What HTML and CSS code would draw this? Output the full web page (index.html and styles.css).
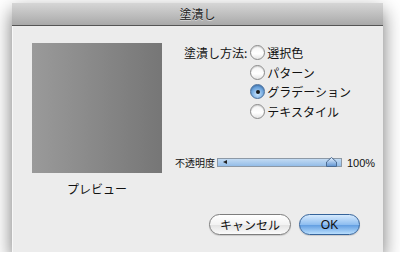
FILE: index.html
```html
<!DOCTYPE html>
<html lang="ja">
<head>
    <meta charset="UTF-8">
    <title>塗潰し</title>
    <link rel="stylesheet" href="styles.css">
</head>
<body>

    <div class="window">
        <div class="titlebar">塗潰し</div>
        <div class="content">
            <div class="main">
                <div class="preview-col">
                    <div class="preview"></div>
                    <div class="preview-label">プレビュー</div>
                </div>
                <div class="options-col">
                    <div class="fill-method">
                        <div class="field-label">塗潰し方法:</div>
                        <div class="radio-list">
                            <div class="radio-row"><span class="radio"></span>選択色</div>
                            <div class="radio-row"><span class="radio"></span>パターン</div>
                            <div class="radio-row"><span class="radio checked"></span>グラデーション</div>
                            <div class="radio-row"><span class="radio"></span>テキスタイル</div>
                        </div>
                    </div>
                    <div class="opacity-row">
                        <span class="opacity-label">不透明度</span>
                        <div class="slider">
                            <span class="slider-arrow"></span>
                            <svg class="slider-thumb" width="11" height="10" viewBox="0 0 11 10">
                                <defs>
                                    <linearGradient id="thumbGrad" x1="0" y1="0" x2="0" y2="1">
                                        <stop offset="0" stop-color="#eaf4ff"/>
                                        <stop offset="1" stop-color="#5d93d2"/>
                                    </linearGradient>
                                </defs>
                                <path d="M5.5 0.5 L10.5 5 L10.5 9.5 L0.5 9.5 L0.5 5 Z" fill="url(#thumbGrad)" stroke="#4c6c92" stroke-width="1" stroke-linejoin="round"/>
                            </svg>
                        </div>
                        <span class="opacity-value">100%</span>
                    </div>
                </div>
            </div>
            <div class="buttons">
                <button class="btn">キャンセル</button>
                <button class="btn btn-default">OK</button>
            </div>
        </div>
    </div>

</body>
</html>
```

FILE: styles.css
```css
body {
    margin: 0;
    padding: 0;
    background-color: #fff;
    font-family: "Noto Sans CJK JP", "Liberation Sans", sans-serif;
    font-size: 12px;
    color: #111;
}
.window {
    width: 371px;
    height: 249px;
    margin: 3px 0 0 12px;
    background: #ececec;
    box-shadow: 0 8px 18px rgba(0,0,0,0.55);
    display: flex;
    flex-direction: column;
}
.titlebar {
    height: 22px;
    line-height: 22px;
    text-align: center;
    font-size: 12px;
    color: #222;
    text-shadow: 0 1px 0 rgba(255,255,255,0.5);
    background: linear-gradient(#d6d6d6, #a9a9a9);
    border-bottom: 1px solid #555;
}
.content {
    flex: 1;
    padding: 17px 22px 0 19px;
    border-left: 1px solid #f8f8f8;
}
.main {
    display: flex;
    gap: 22px;
}
.preview-col {
    width: 130px;
}
.preview {
    width: 130px;
    height: 130px;
    background: linear-gradient(to right, #9a9a9a, #767676);
}
.preview-label {
    margin-top: 8px;
    text-align: center;
    line-height: 16px;
}
.options-col {
    flex: 1;
    height: 130px;
    display: flex;
    flex-direction: column;
    justify-content: space-between;
}
.fill-method {
    display: flex;
    gap: 3px;
}
.field-label {
    line-height: 19px;
}
.radio-row {
    display: flex;
    align-items: center;
    gap: 2px;
    height: 19.5px;
}
.radio {
    width: 13px;
    height: 13px;
    border-radius: 50%;
    border: 1px solid #8a8a8a;
    background: linear-gradient(#f4f4f4, #fff 60%, #e4e4e4);
    box-shadow: inset 0 1px 1px rgba(0,0,0,0.15);
    position: relative;
}
.radio.checked {
    border-color: #4a6f9a;
    background: radial-gradient(circle at 50% 70%, #cbe6ff, #6fa6dd 55%, #3c78bf);
}
.radio.checked::after {
    content: "";
    position: absolute;
    left: 4.5px;
    top: 4.5px;
    width: 4px;
    height: 4px;
    border-radius: 50%;
    background: #1a1a1a;
}
.opacity-row {
    display: flex;
    align-items: center;
    gap: 2px;
    margin-left: -9px;
    margin-bottom: 3px;
    white-space: nowrap;
}
.opacity-label {
    font-size: 10px;
    flex-shrink: 0;
}
.slider {
    position: relative;
    width: 123px;
    height: 7px;
    flex-shrink: 0;
    border: 1px solid #8d99a6;
    background: linear-gradient(#c3dbf3, #94bde8);
}
.slider-arrow {
    position: absolute;
    left: 5px;
    top: 1px;
    border-right: 4px solid #222;
    border-top: 2.5px solid transparent;
    border-bottom: 2.5px solid transparent;
}
.slider-thumb {
    position: absolute;
    right: 4px;
    top: -2px;
}
.opacity-value {
    font-family: "Liberation Sans", sans-serif;
    font-size: 11px;
    margin-left: 3px;
}
.buttons {
    display: flex;
    justify-content: flex-end;
    gap: 8px;
    margin-top: 17px;
    padding-right: 1px;
}
.btn {
    height: 21px;
    padding: 0;
    width: 82px;
    border-radius: 11px;
    border: 1px solid #7d7d7d;
    background: linear-gradient(#ffffff, #f3f3f3 50%, #e2e2e2 51%, #fbfbfb);
    font-family: "Noto Sans CJK JP", "Liberation Sans", sans-serif;
    font-size: 12px;
    color: #111;
    box-shadow: 0 1px 1px rgba(0,0,0,0.15);
}
.btn-default {
    width: 61px;
    border-color: #35639a;
    background: linear-gradient(#d6eafe, #8fbef0 50%, #5e9be0 51%, #b9defd);
    font-family: "Liberation Sans", sans-serif;
}
```
